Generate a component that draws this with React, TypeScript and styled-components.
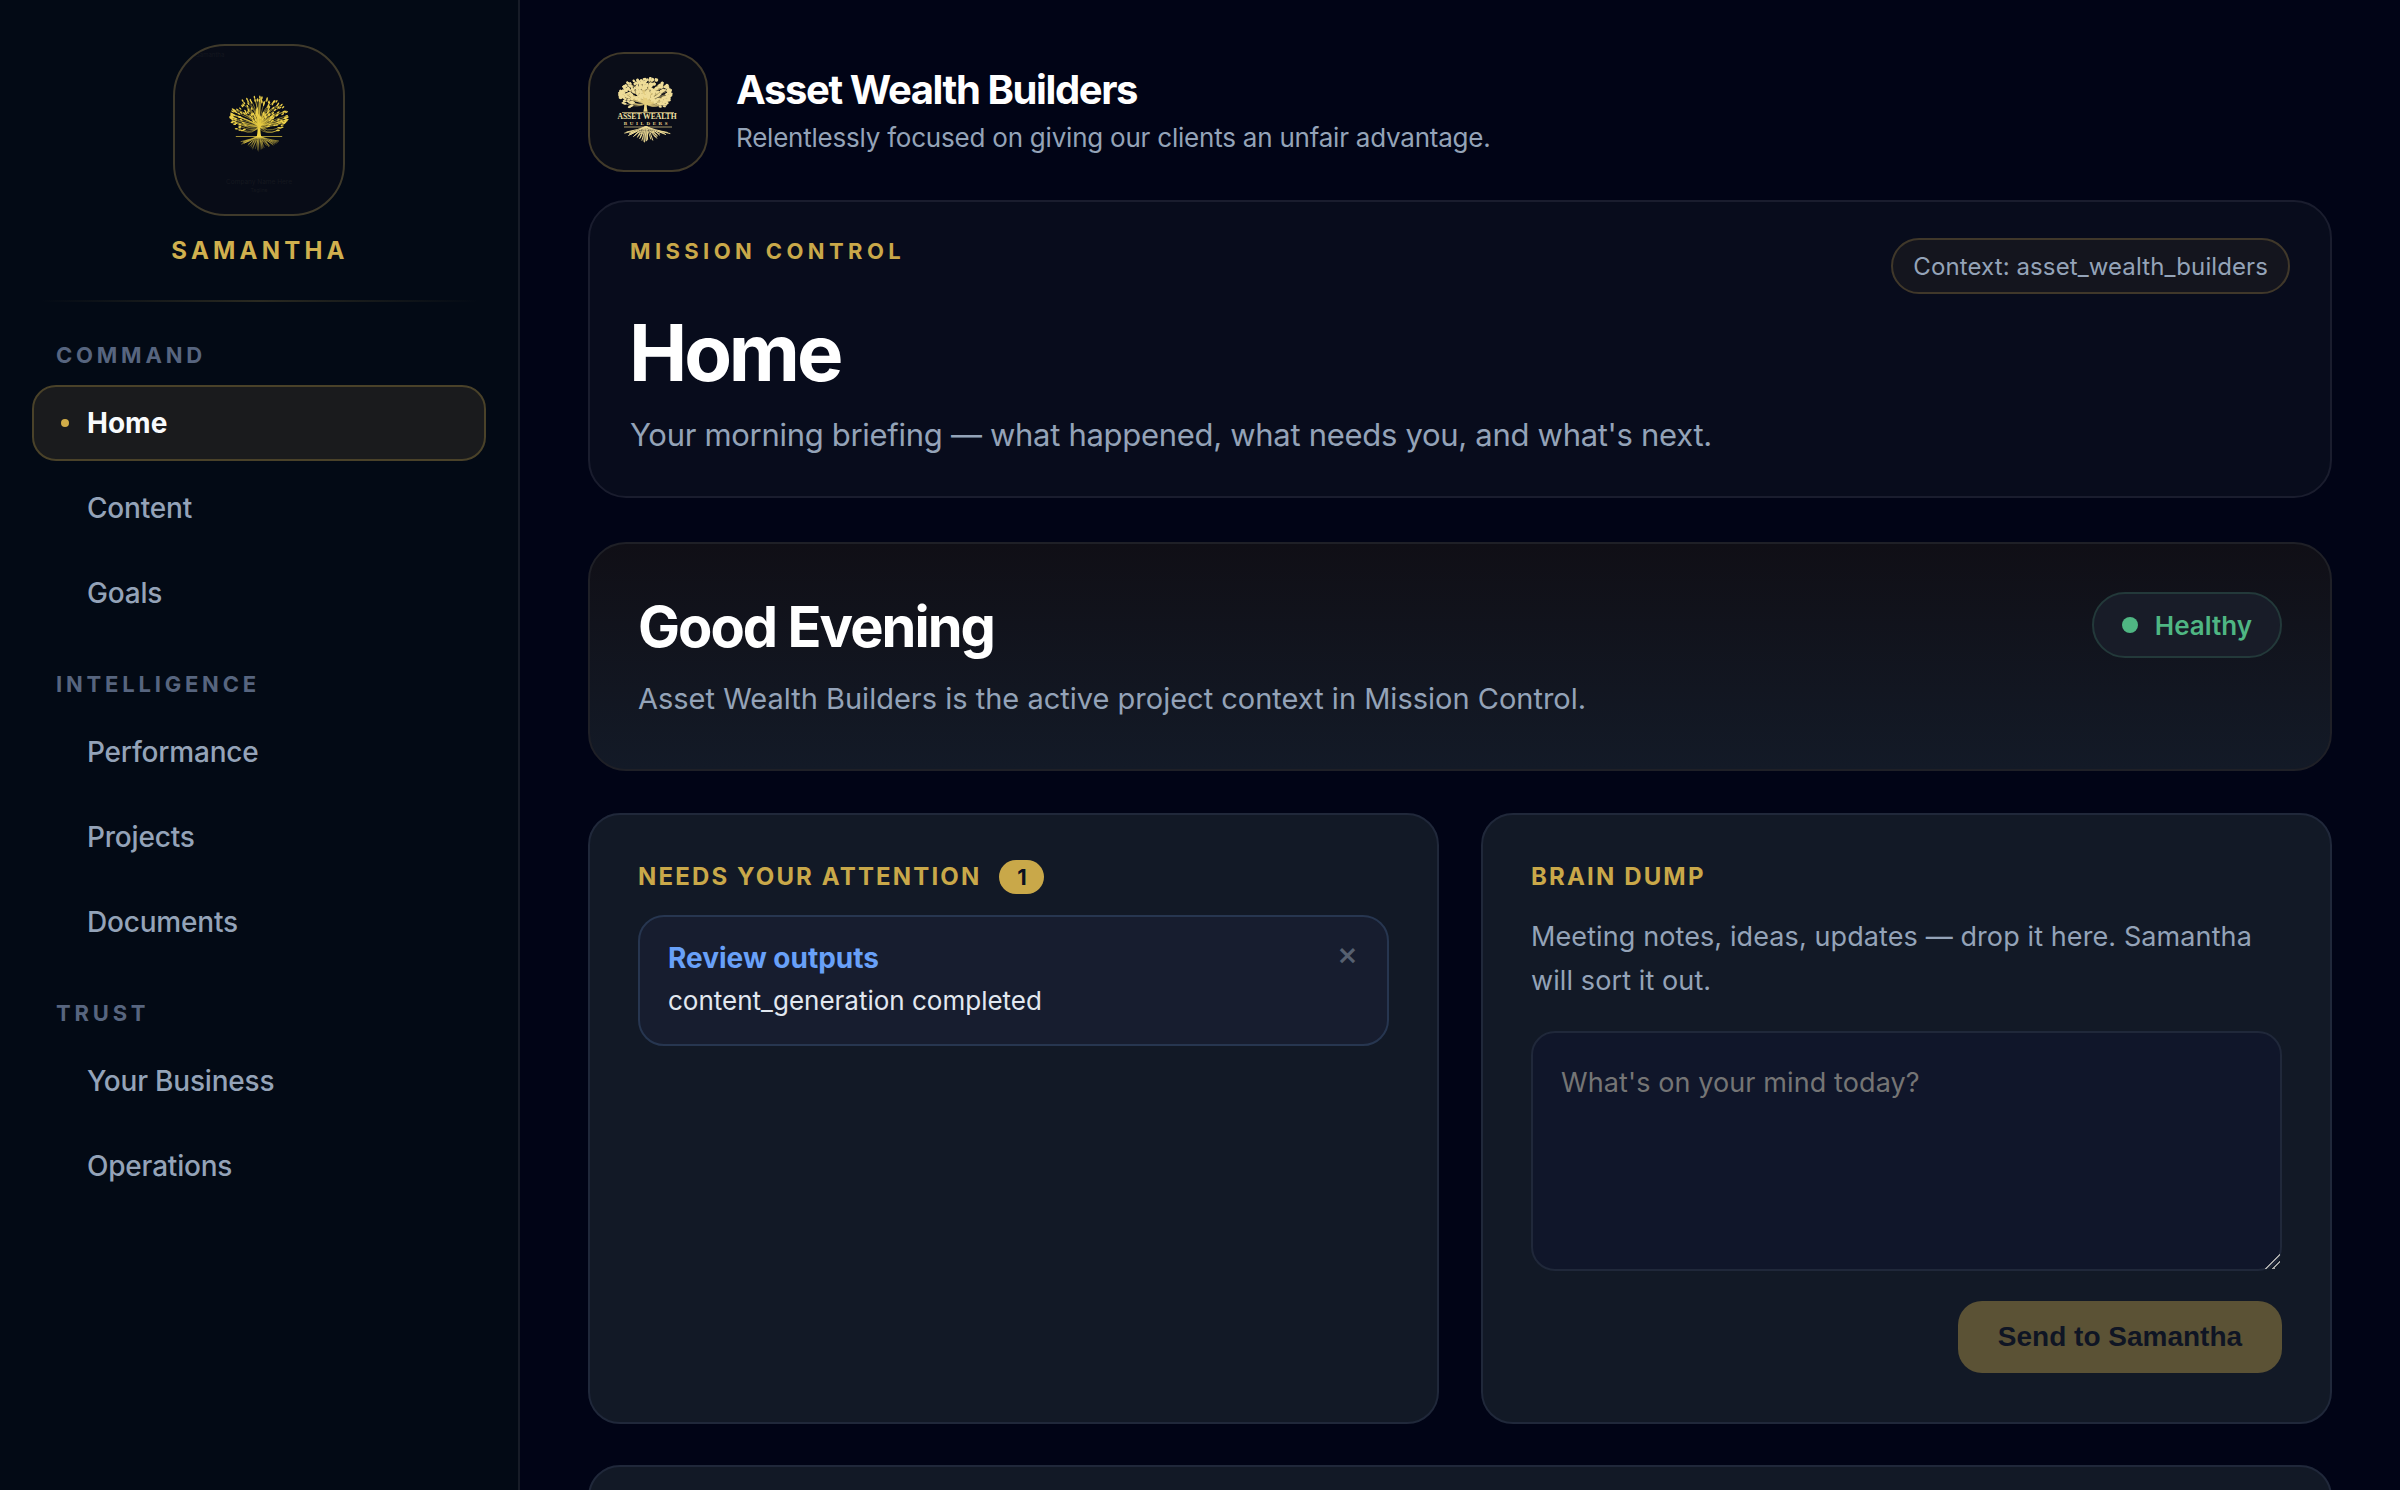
import React from 'react';
import styled, { createGlobalStyle } from 'styled-components';

const Global = createGlobalStyle`
  html, body { margin: 0; padding: 0; background: #010416; }
  * { box-sizing: border-box; }
  #root { height: 100vh; }
`;

const Shell = styled.div`
  display: flex;
  height: 1490px;
  overflow: hidden;
  font-family: Inter, "Liberation Sans", sans-serif;
`;

const Sidebar = styled.aside`
  flex: 0 0 520px;
  background: #030a15;
  border-right: 2px solid #171c27;
  padding: 44px 32px 0 32px;
  display: flex;
  flex-direction: column;
`;

const Brand = styled.div`
  display: flex;
  flex-direction: column;
  align-items: center;
  padding-bottom: 34px;
`;

const BrandBox = styled.div`
  width: 172px;
  height: 172px;
  border-radius: 52px;
  border: 2px solid #3f3a2b;
  background: #080c17;
  overflow: hidden;
`;

const BrandName = styled.div`
  margin-top: 20px;
  font-size: 24px;
  line-height: 30px;
  font-weight: 700;
  letter-spacing: 4.2px;
  margin-right: -2px;
  color: #d0b04e;
`;

const Divider = styled.div`
  height: 2px;
  flex: none;
  margin: 0 8px;
  background: linear-gradient(90deg, rgba(200,170,80,0), rgba(200,170,80,.2) 50%, rgba(200,170,80,0));
`;

const SectionLabel = styled.div<{ $first?: boolean }>`
  margin: ${p => (p.$first ? '40px' : '40px')} 0 17px 24px;
  font-size: 22px;
  line-height: 26px;
  font-weight: 700;
  letter-spacing: 3.8px;
  color: #57657f;
`;

const NavList = styled.div`
  display: flex;
  flex-direction: column;
  gap: 9px;
`;

const NavItem = styled.div<{ $active?: boolean }>`
  height: 76px;
  flex: none;
  display: flex;
  align-items: center;
  gap: 18px;
  padding-left: ${p => (p.$active ? '27px' : '53px')};
  border-radius: 24px;
  border: 2px solid ${p => (p.$active ? '#4a4229' : 'transparent')};
  background: ${p => (p.$active ? '#1a1b1d' : 'transparent')};
  color: ${p => (p.$active ? '#f8fafc' : '#94a3b8')};
  font-size: 28px;
  letter-spacing: ${p => (p.$active ? '0' : '-0.2px')};
  font-weight: ${p => (p.$active ? 700 : 500)};
`;

const NavDot = styled.span`
  width: 8px;
  height: 8px;
  border-radius: 50%;
  background: #d0ac48;
`;

const Main = styled.main`
  flex: 1;
  min-width: 0;
  padding: 52px 68px 0 68px;
  display: flex;
  flex-direction: column;
`;

const Header = styled.header`
  flex: none;
  display: flex;
  align-items: center;
  gap: 28px;
  height: 120px;
  margin-bottom: 28px;
`;

const HeaderLogo = styled.div`
  width: 120px;
  height: 120px;
  border-radius: 36px;
  border: 2px solid #413a2a;
  background: #0a0d18;
  overflow: hidden;
`;

const HeaderText = styled.div`
  display: flex;
  flex-direction: column;
  gap: 6px;
  padding-bottom: 4px;
`;

const HeaderTitle = styled.h1`
  margin: 0;
  font-size: 40px;
  line-height: 50px;
  font-weight: 700;
  letter-spacing: -0.035em;
  color: #fff;
`;

const HeaderSub = styled.p`
  margin: 0;
  font-size: 26px;
  line-height: 34px;
  letter-spacing: -0.22px;
  color: #94a3b8;
`;

const HeroCard = styled.section`
  flex: none;
  height: 298px;
  border-radius: 38px;
  border: 2px solid #1a1d2e;
  background: #080c1c;
  padding: 36px 40px;
  display: flex;
  justify-content: space-between;
  align-items: flex-start;
  margin-bottom: 44px;
`;

const HeroCopy = styled.div`
  display: flex;
  flex-direction: column;
`;

const Eyebrow = styled.div`
  font-size: 22px;
  line-height: 26px;
  font-weight: 700;
  letter-spacing: 4.4px;
  color: #c9a849;
`;

const HeroTitle = styled.h2`
  margin: 43px 0 0 -1px;
  font-size: 78px;
  line-height: 92px;
  font-weight: 700;
  letter-spacing: -0.04em;
  color: #fff;
`;

const HeroSub = styled.p`
  margin: 15px 0 0;
  font-size: 31px;
  line-height: 42px;
  letter-spacing: -0.3px;
  color: #94a3b8;
`;

const ContextPill = styled.div`
  height: 56px;
  display: flex;
  align-items: center;
  padding: 0 20px;
  border-radius: 28px;
  border: 2px solid #40382a;
  background: #14151e;
  color: #94a3b8;
  font-size: 24px;
  letter-spacing: 0.1px;
`;

const GreetingCard = styled.section`
  flex: none;
  height: 229px;
  border-radius: 38px;
  border: 2px solid #1f2027;
  background: linear-gradient(180deg, #100f16, #131a27);
  padding: 48px;
  display: flex;
  justify-content: space-between;
  align-items: flex-start;
  margin-bottom: 42px;
`;

const GreetingTitle = styled.h2`
  margin: 2px 0 0;
  font-size: 56px;
  line-height: 66px;
  font-weight: 700;
  letter-spacing: -0.035em;
  color: #fff;
`;

const GreetingSub = styled.p`
  margin: 18px 0 0;
  font-size: 29px;
  line-height: 42px;
  color: #94a3b8;
`;

const HealthPill = styled.div`
  height: 66px;
  display: flex;
  align-items: center;
  gap: 17px;
  padding: 0 28px;
  border-radius: 33px;
  border: 2px solid #23393a;
  background: #181c28;
  color: #4fb683;
  font-size: 26px;
  font-weight: 600;
`;

const HealthDot = styled.span`
  width: 16px;
  height: 16px;
  border-radius: 50%;
  background: #4fb683;
`;

const Grid = styled.div`
  flex: none;
  display: grid;
  grid-template-columns: 1fr 1fr;
  gap: 42px;
`;

const Panel = styled.section`
  height: 611px;
  border-radius: 32px;
  border: 2px solid #20283a;
  background: #121926;
  padding: 45px 48px 48px;
  display: flex;
  flex-direction: column;
`;

const PanelHead = styled.div`
  display: flex;
  align-items: center;
  gap: 18px;
  height: 34px;
  margin-bottom: 21px;
`;

const PanelTitle = styled.h3`
  margin: 0;
  font-size: 24px;
  line-height: 30px;
  font-weight: 700;
  letter-spacing: 2.15px;
  color: #c9a849;
`;

const CountBadge = styled.span`
  width: 45px;
  height: 34px;
  border-radius: 17px;
  background: #c9a849;
  color: #0b1020;
  font-size: 22px;
  font-weight: 700;
  display: flex;
  align-items: center;
  justify-content: center;
`;

const AlertItem = styled.div`
  position: relative;
  height: 131px;
  border-radius: 26px;
  border: 2px solid #273650;
  background: #171d2f;
  padding: 22px 28px;
`;

const AlertTitle = styled.div`
  font-size: 28px;
  line-height: 38px;
  font-weight: 700;
  color: #68a0f8;
`;

const AlertText = styled.div`
  margin-top: 5px;
  font-size: 26px;
  line-height: 38px;
  color: #e2e8f0;
`;

const Dismiss = styled.span`
  position: absolute;
  top: 17px;
  right: 29px;
  font-size: 32px;
  line-height: 40px;
  font-weight: 500;
  color: #566070;
`;

const BrainText = styled.p`
  margin: 0 0 28px;
  font-size: 27px;
  line-height: 44px;
  letter-spacing: 0.1px;
  color: #94a3b8;
`;

const Area = styled.textarea`
  display: block;
  width: 100%;
  height: 240px;
  flex: none;
  border-radius: 24px;
  border: 2px solid #20283a;
  background: #10162a;
  padding: 30px 28px 20px;
  font-family: Inter, sans-serif;
  font-size: 27px;
  line-height: 40px;
  letter-spacing: 0.1px;
  color: #e2e8f0;
  outline: none;
  resize: vertical;
  color-scheme: dark;
  &::placeholder { color: #757575; }
  &::-webkit-resizer {
    background: linear-gradient(135deg, transparent 0 47%, #a8a8a8 47% 54%, transparent 54% 73%, #a8a8a8 73% 80%, transparent 80%);
  }
`;

const Actions = styled.div`
  display: flex;
  justify-content: flex-end;
  margin-top: 30px;
`;

const SendButton = styled.button`
  height: 72px;
  width: 324px;
  border: none;
  border-radius: 24px;
  background: #5b5235;
  color: #0f1524;
  font-family: "Liberation Sans", Arial, sans-serif;
  font-size: 28px;
  font-weight: 700;
`;

const NextPanel = styled.section`
  flex: none;
  height: 300px;
  margin-top: 41px;
  border-radius: 32px;
  border: 2px solid #20283a;
  background: #121926;
`;

/* ---------- tree drawing ---------- */
function seeded(seed: number) {
  let s = seed;
  return () => {
    s = (s * 16807) % 2147483647;
    return (s - 1) / 2147483646;
  };
}

function buildTree(seed: number, count: number) {
  const r = seeded(seed);
  const leaves: { x: number; y: number; a: number }[] = [];
  const trunk = 'M46 76 C48 66 48 60 47 50 L53 50 C52 60 52 66 54 76 Z ';
  const tw: string[] = [];
  for (let i = 0; i < count; i++) {
    const u = r() * 2 - 1;
    const au = Math.abs(u);
    const top = 38 - 37 * Math.sqrt(1 - u * u);
    const bottom = 44 + 22 * Math.sin(Math.PI * Math.pow(au, 1.5));
    const x = 50 + 49 * u;
    const y = top + r() * (bottom - top);
    const a = (Math.atan2(y - 60, x - 50) * 180) / Math.PI;
    leaves.push({ x, y, a });
    if (i % 2 === 0) {
      tw.push(`M50 ${60 - r() * 8} Q${50 + (x - 50) * 0.35} ${y + 10} ${x.toFixed(1)} ${y.toFixed(1)}`);
    }
  }
  const roots: string[] = [];
  for (let i = 0; i < 15; i++) {
    const t = (i - 7) / 7;
    const ex = 50 + t * 34 + (r() - 0.5) * 5;
    const ey = 82 + (1 - Math.abs(t)) * 17 + r() * 3;
    const mx = 50 + t * 12;
    roots.push(`M50 74 Q${mx.toFixed(1)} 80 ${ex.toFixed(1)} ${ey.toFixed(1)}`);
    roots.push(`M${(50 + t * 20).toFixed(1)} 82 L${(ex + (r() - 0.5) * 10).toFixed(1)} ${(ey + 2).toFixed(1)}`);
  }
  return { leaves, trunk, twigs: tw.join(' '), roots: roots.join(' ') };
}

const Drawing = styled.svg`
  display: block;
`;

const sidebarTree = buildTree(73, 170);
const headerTree = buildTree(411, 300);

function SidebarEmblem() {
  const t = sidebarTree;
  return (
    <Drawing width="168" height="168" viewBox="0 0 168 168">
      <defs>
        <linearGradient id="rootFade" x1="0" y1="0" x2="0" y2="1">
          <stop offset="0" stopColor="#f0d548" />
          <stop offset="1" stopColor="#f0d548" stopOpacity="0.15" />
        </linearGradient>
      </defs>
      <text x="21" y="11" fontFamily="Inter, sans-serif" fontSize="6" fill="#14171f">Samantha</text>
      <g transform="translate(55 50) scale(0.58 0.54)">
        <path d={t.trunk} fill="#f0d548" />
        <path d={t.twigs} fill="none" stroke="#e8cc44" strokeWidth="0.9" />
        {t.leaves.map((l, i) => (
          <ellipse key={i} cx={l.x} cy={l.y} rx="2.7" ry="1.3" fill="#ecd04a" transform={`rotate(${l.a} ${l.x} ${l.y})`} />
        ))}
        <path d="M10 75 H90" stroke="#f0d548" strokeWidth="1.6" opacity="0.75" />
        <path d={t.roots} fill="none" stroke="url(#rootFade)" strokeWidth="1.3" />
      </g>
      <text x="84" y="138" textAnchor="middle" fontFamily="Inter, sans-serif" fontSize="6.5" fill="#15181f">Company Name Here</text>
      <text x="84" y="146" textAnchor="middle" fontFamily="Inter, sans-serif" fontSize="5" fill="#15181f">Tagline</text>
    </Drawing>
  );
}

function HeaderEmblem() {
  const t = headerTree;
  return (
    <Drawing width="116" height="116" viewBox="0 0 116 116">
      <g transform="translate(29 23.5) scale(0.53 0.45)">
        <path d={t.trunk} fill="#ecd684" />
        <path d={t.twigs} fill="none" stroke="#e6cf80" strokeWidth="1" />
        {t.leaves.map((l, i) => (
          <ellipse key={i} cx={l.x} cy={l.y} rx="3.2" ry="2.3" fill="#efdd98" transform={`rotate(${l.a} ${l.x} ${l.y})`} />
        ))}
      </g>
      <path d="M32 58.5 H84" stroke="#e8d28a" strokeWidth="0.7" />
      <text x="57" y="65" textAnchor="middle" fontFamily="'Liberation Serif', serif" fontWeight="700" fontSize="7.6" fill="#f2e2a4">ASSET WEALTH</text>
      <text x="57" y="71" textAnchor="middle" fontFamily="'Liberation Serif', serif" fontWeight="700" fontSize="5" letterSpacing="2.6" fill="#e8d28a">BUILDERS</text>
      <path d="M34 73 H82" stroke="#e8d28a" strokeWidth="0.7" />
      <g transform="translate(25 31) scale(0.62 0.56)">
        <path d={t.roots} fill="none" stroke="#efdc96" strokeWidth="1.6" />
      </g>
    </Drawing>
  );
}

const navGroups = [
  { label: 'COMMAND', items: ['Home', 'Content', 'Goals'] },
  { label: 'INTELLIGENCE', items: ['Performance', 'Projects', 'Documents'] },
  { label: 'TRUST', items: ['Your Business', 'Operations'] },
];

export default function App() {
  return (
    <Shell>
      <Global />
      <Sidebar>
        <Brand>
          <BrandBox><SidebarEmblem /></BrandBox>
          <BrandName>SAMANTHA</BrandName>
        </Brand>
        <Divider />
        {navGroups.map((g, i) => (
          <React.Fragment key={g.label}>
            <SectionLabel $first={i === 0}>{g.label}</SectionLabel>
            <NavList>
              {g.items.map(item => (
                <NavItem key={item} $active={item === 'Home'}>
                  {item === 'Home' && <NavDot />}
                  {item}
                </NavItem>
              ))}
            </NavList>
          </React.Fragment>
        ))}
      </Sidebar>
      <Main>
        <Header>
          <HeaderLogo><HeaderEmblem /></HeaderLogo>
          <HeaderText>
            <HeaderTitle>Asset Wealth Builders</HeaderTitle>
            <HeaderSub>Relentlessly focused on giving our clients an unfair advantage.</HeaderSub>
          </HeaderText>
        </Header>
        <HeroCard>
          <HeroCopy>
            <Eyebrow>MISSION CONTROL</Eyebrow>
            <HeroTitle>Home</HeroTitle>
            <HeroSub>Your morning briefing — what happened, what needs you, and what's next.</HeroSub>
          </HeroCopy>
          <ContextPill>Context: asset_wealth_builders</ContextPill>
        </HeroCard>
        <GreetingCard>
          <div>
            <GreetingTitle>Good Evening</GreetingTitle>
            <GreetingSub>Asset Wealth Builders is the active project context in Mission Control.</GreetingSub>
          </div>
          <HealthPill><HealthDot />Healthy</HealthPill>
        </GreetingCard>
        <Grid>
          <Panel>
            <PanelHead>
              <PanelTitle>NEEDS YOUR ATTENTION</PanelTitle>
              <CountBadge>1</CountBadge>
            </PanelHead>
            <AlertItem>
              <AlertTitle>Review outputs</AlertTitle>
              <AlertText>content_generation completed</AlertText>
              <Dismiss>×</Dismiss>
            </AlertItem>
          </Panel>
          <Panel>
            <PanelHead><PanelTitle>BRAIN DUMP</PanelTitle></PanelHead>
            <BrainText>Meeting notes, ideas, updates — drop it here. Samantha will sort it out.</BrainText>
            <Area placeholder="What's on your mind today?" />
            <Actions><SendButton>Send to Samantha</SendButton></Actions>
          </Panel>
        </Grid>
        <NextPanel />
      </Main>
    </Shell>
  );
}
